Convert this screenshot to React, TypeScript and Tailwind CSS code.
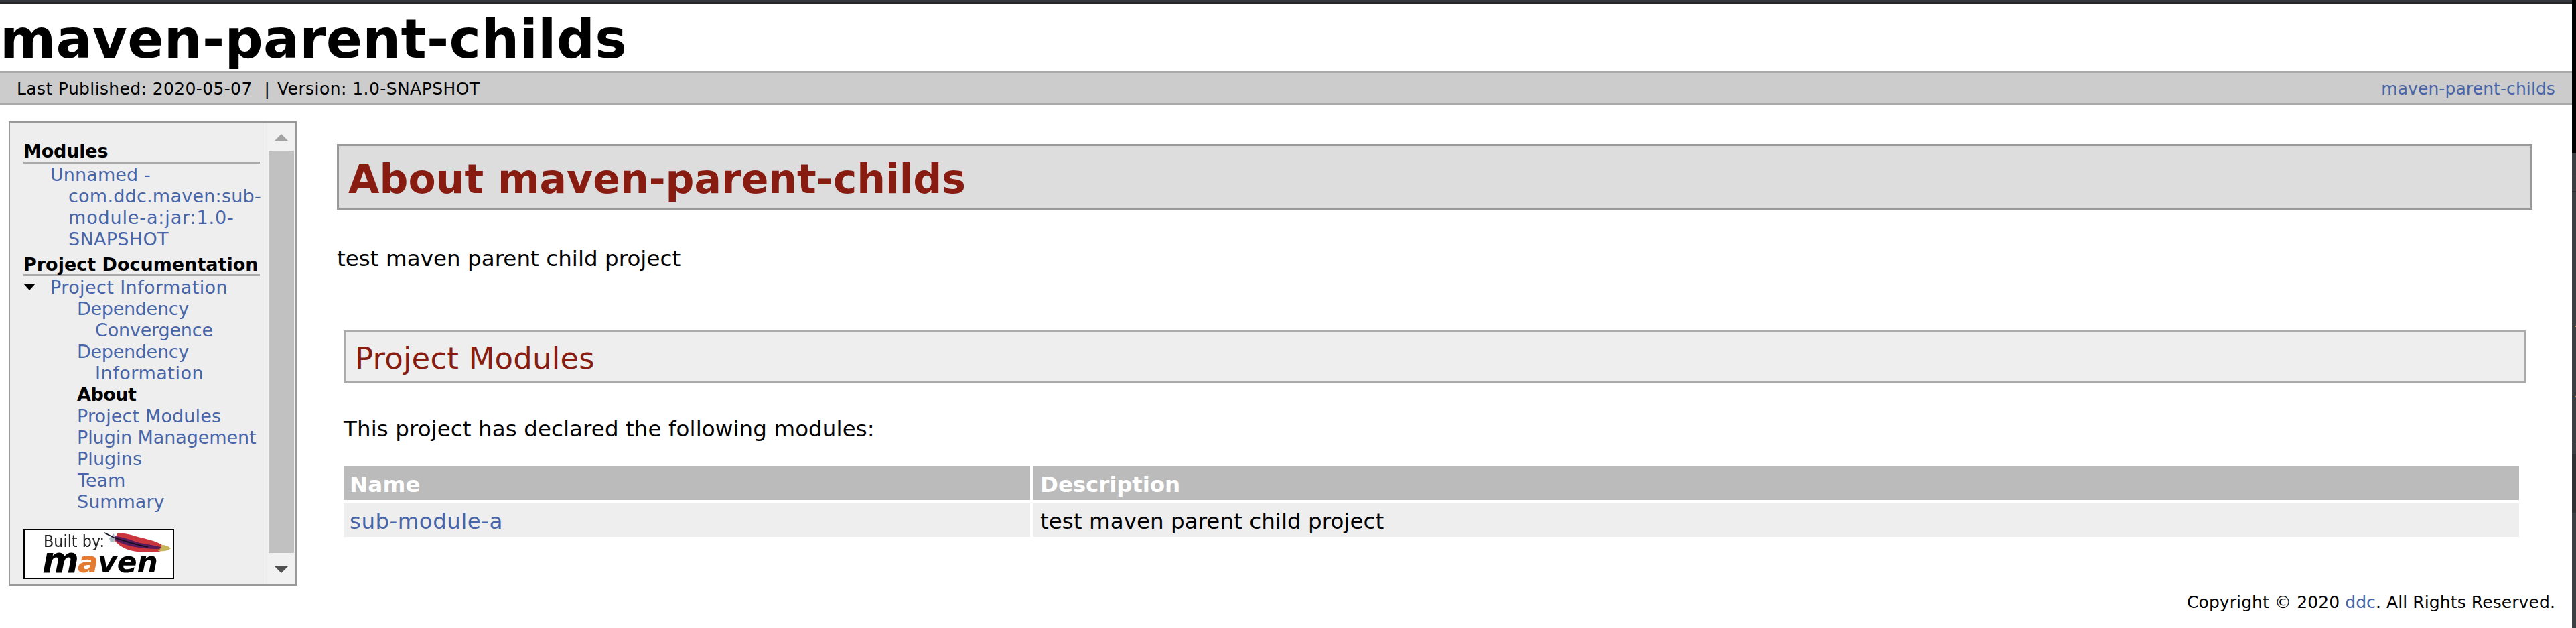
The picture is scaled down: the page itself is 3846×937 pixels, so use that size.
import React from 'react';

const LINK = 'text-[#4765a8]';

const moduleLines = [
  { text: 'Unnamed -', cls: 'pl-10 tracking-[0.1px]' },
  { text: 'com.ddc.maven:sub-', cls: 'pl-[67px] tracking-[0.24px]' },
  { text: 'module-a:jar:1.0-', cls: 'pl-[67px] tracking-[0.86px]' },
  { text: 'SNAPSHOT', cls: 'pl-[67px] tracking-[0.32px]' },
];

const docLines = [
  { text: 'Dependency', cls: 'pl-[80px] tracking-[-0.3px]' },
  { text: 'Convergence', cls: 'pl-[107px] tracking-[-0.2px]' },
  { text: 'Dependency', cls: 'pl-[80px] tracking-[-0.3px]' },
  { text: 'Information', cls: 'pl-[107px] tracking-[0.53px]' },
  { text: 'About', cls: 'pl-[80px] tracking-[-0.5px] font-bold text-black' },
  { text: 'Project Modules', cls: 'pl-[80px] tracking-[0.13px]' },
  { text: 'Plugin Management', cls: 'pl-[80px] tracking-[-0.09px]' },
  { text: 'Plugins', cls: 'pl-[80px] tracking-[0.06px]' },
  { text: 'Team', cls: 'pl-[81px]' },
  { text: 'Summary', cls: 'pl-[80px]' },
];

function MavenBadge() {
  const glyph = {
    fontFamily: '"DejaVu Sans", sans-serif',
    fontWeight: 700,
    fontStyle: 'italic',
    lengthAdjust: 'spacingAndGlyphs',
  } as const;
  return (
    <svg width="225" height="75" viewBox="0 0 225 75" className="mt-6 block">
      <rect x="1" y="1" width="223" height="73" fill="#fff" stroke="#000" strokeWidth="2" />
      <g className="blur-[0.6px]">
        <text x="30" y="27" fontSize="24" fill="#222" fontFamily='"DejaVu Sans", sans-serif' textLength="91" lengthAdjust="spacingAndGlyphs">
          Built by:
        </text>
        <text x="28" y="65" fontSize="54" {...glyph} textLength="55">m</text>
        <text x="81" y="65" fontSize="45" fill="#e57b30" {...glyph} textLength="31">a</text>
        <text x="111" y="65" fontSize="45" {...glyph} textLength="90">ven</text>
        <path d="M135 7 L138 18 L130 20 L128 14 Z" fill="#a9bac2" />
        <path d="M140 7 C150 5 163 10 175 13 C187 16 198 18 207 24 C208 29 206 34 202 34 C188 36 168 35 156 31 C148 28 140 23 136 17 Z" fill="#cb353e" />
        <path d="M136 11 C150 12 160 17 174 21 C186 23 196 25 205 27 L203 30 C188 30 168 28 154 24 C146 21 140 19 137 17 Z" fill="#571a5c" />
        <path d="M206 24 C212 24 217 26 220 29 C216 33 208 34 201 33 C205 30 206 27 206 24 Z" fill="#c5b45a" />
        <path d="M121 6 L135 13 C152 18 164 23 186 27" fill="none" stroke="#14101c" strokeWidth="1.8" />
      </g>
    </svg>
  );
}

function Sidebar() {
  return (
    <aside className="ml-[13px] mt-[25px] flex h-[693px] w-[430px] shrink-0 border-2 border-[#999] bg-[#eee]">
      <nav className={`w-[383px] pl-5 pt-[27px] text-[27px] leading-[32px] whitespace-nowrap ${LINK}`}>
        <h5 className="h-[34px] w-[353px] border-b-[3px] border-[#aaa] font-bold leading-[31px] tracking-[-0.17px] text-black">
          Modules
        </h5>
        <ul className="pt-px">
          {moduleLines.map((l) => (
            <li key={l.text} className={l.cls}>{l.text}</li>
          ))}
        </ul>
        <h5 className="mt-1.5 h-[33px] w-[353px] border-b-[3px] border-[#aaa] font-bold leading-[31px] text-black">
          Project Documentation
        </h5>
        <ul className="pt-px">
          <li className="flex tracking-[0.41px]">
            <span className="w-10 pt-[10px]">
              <svg width="18" height="10" viewBox="0 0 18 10" className="block">
                <path d="M0 0H18L9 10Z" fill="#000" />
              </svg>
            </span>
            Project Information
          </li>
          {docLines.map((l, i) => (
            <li key={i} className={l.cls}>{l.text}</li>
          ))}
        </ul>
        <MavenBadge />
      </nav>
      <div className="flex w-[43px] flex-col items-center border-l border-white bg-[#f1f1f1]">
        <svg width="20" height="10" viewBox="0 0 20 10" className="mt-[17px] block">
          <path d="M10 0L20 10H0Z" fill="#a3a3a3" />
        </svg>
        <div className="mt-[15px] h-[600px] w-[38px] bg-[#c1c1c1]" />
        <svg width="20" height="10" viewBox="0 0 20 10" className="mt-5 block">
          <path d="M0 0H20L10 10Z" fill="#505050" />
        </svg>
      </div>
    </aside>
  );
}

function EdgeStrip() {
  return (
    <div className="flex w-1.5 shrink-0 flex-col items-end bg-[#3c3f41]">
      <div className="h-[228px] w-full bg-black" />
      <div className="mt-7 h-px w-full bg-[#555]" />
      <div className="mt-7 h-px w-full bg-[#2b2b2b]" />
      <div className="mt-[200px] h-0.5 w-px bg-[#d9883a]" />
      <div className="mt-[103px] h-0.5 w-px bg-[#d9883a]" />
      <div className="mt-[66px] h-px w-px bg-[#666]" />
      <div className="mt-[18px] h-[87px] w-full bg-[#303132]" />
    </div>
  );
}

export default function App() {
  return (
    <div className="flex h-[937px] w-[3846px] overflow-hidden bg-white font-['DejaVu_Sans',Verdana,sans-serif] text-black">
      <div className="flex w-[3840px] shrink-0 flex-col">
        <div className="h-[3px] bg-[#36373c]" />
        <div className="h-[3px] bg-[#252525]" />
        <header className="h-[100px] pt-1.5 text-[80px] font-bold leading-[93px] tracking-[0.25px]">
          maven-parent-childs
        </header>
        <div className="flex h-[50px] border-y-[3px] border-[#aaa] bg-[#ccc] pl-[25px] pr-[25px] pt-[9px] text-[25px] leading-[29px]">
          <span className="w-[369.5px] tracking-[0.37px]">Last Published: 2020-05-07</span>
          <span className="w-[19.5px]">|</span>
          <span className="tracking-[0.43px]">Version: 1.0-SNAPSHOT</span>
          <a className={`ml-auto tracking-[0.09px] ${LINK}`}>maven-parent-childs</a>
        </div>
        <div className="flex">
          <Sidebar />
          <main className="ml-[60px] mt-[59px] w-[3278px] text-[32.5px] leading-[38px]">
            <h2 className="h-[98px] border-[3px] border-[#999] bg-[#ddd] pl-[14px] pt-[14px] text-[60px] font-bold leading-[70px] tracking-[0.02px] text-[#881c10]">
              About maven-parent-childs
            </h2>
            <p className="mt-[54px] tracking-[0.05px]">test maven parent child project</p>
            <section className="ml-[10px] mr-[10px] mt-[88px]">
              <h3 className="h-[79px] border-[3px] border-[#aaa] bg-[#eee] pl-[14px] pt-3 text-[45px] leading-[53px] tracking-[0.17px] text-[#881c10]">
                Project Modules
              </h3>
              <p className="mt-[49px] tracking-[0.09px]">This project has declared the following modules:</p>
              <div className="mr-[10px] mt-[37px] grid grid-cols-[1025px_1fr] gap-[5px]">
                <div className="h-[50px] bg-[#bbb] pl-[9px] pt-2 font-bold tracking-[0.17px] text-white">Name</div>
                <div className="h-[50px] bg-[#bbb] pl-[10px] pt-2 font-bold tracking-[-0.1px] text-white">Description</div>
                <div className={`h-[50px] bg-[#eee] pl-[9px] pt-2 tracking-[0.46px] ${LINK}`}>sub-module-a</div>
                <div className="h-[50px] bg-[#eee] pl-[10px] pt-2 tracking-[0.05px]">test maven parent child project</div>
              </div>
            </section>
          </main>
        </div>
        <footer className="mt-[10px] pr-[25px] text-right text-[25px] leading-[29px] tracking-[0.095px]">
          Copyright © 2020 <a className={LINK}>ddc</a>. All Rights Reserved.
        </footer>
      </div>
      <EdgeStrip />
    </div>
  );
}
